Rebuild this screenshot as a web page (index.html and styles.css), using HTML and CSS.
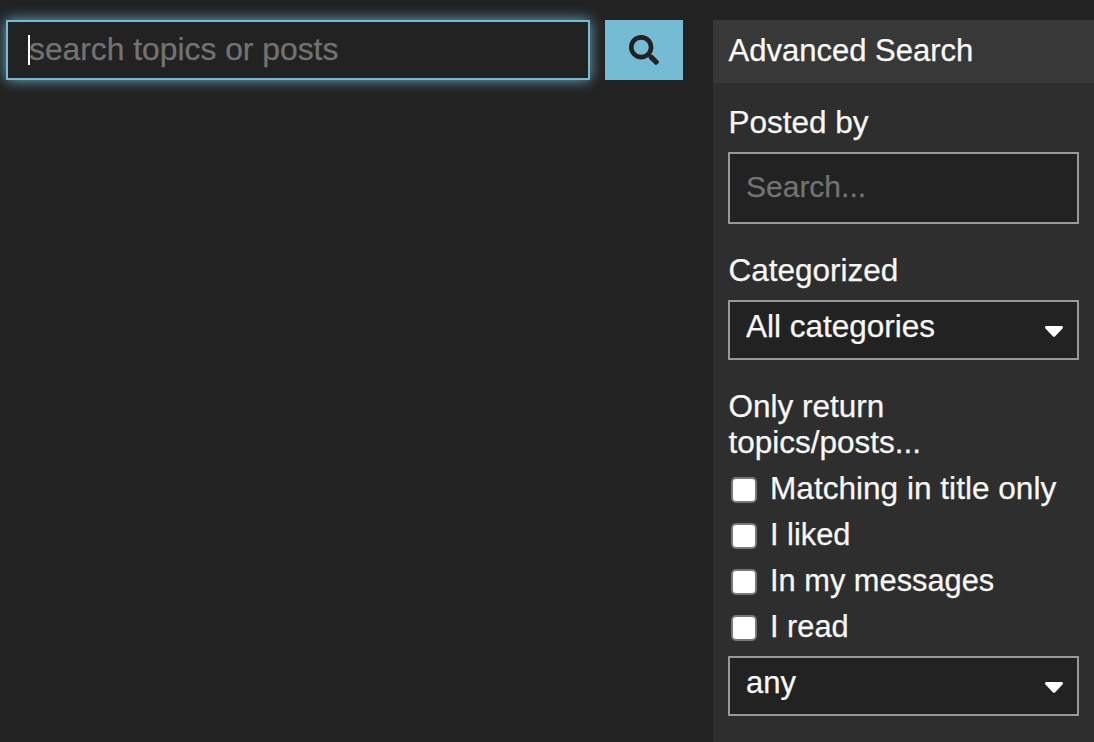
FILE: index.html
```html
<!DOCTYPE html>
<html lang="en">
<head>
<meta charset="utf-8">
<title>Search</title>
<link rel="stylesheet" href="styles.css">
</head>
<body>
<main class="layout">
  <section class="search-bar">
    <div class="search-field">
      <input class="search-input" type="text" placeholder="search topics or posts">
      <span class="caret"></span>
    </div>
    <button class="search-button" type="button" aria-label="Search">
      <svg class="search-icon" viewBox="0 0 512 512"><path d="M505 442.7L405.3 343c-4.5-4.5-10.6-7-17-7H372c27.6-35.3 44-79.7 44-128C416 93.1 322.9 0 208 0S0 93.1 0 208s93.1 208 208 208c48.3 0 92.7-16.4 128-44v16.3c0 6.4 2.5 12.5 7 17l99.7 99.7c9.4 9.4 24.6 9.4 33.9 0l28.3-28.3c9.4-9.4 9.4-24.6.1-34zM208 336c-70.7 0-128-57.2-128-128 0-70.7 57.2-128 128-128 70.7 0 128 57.2 128 128 0 70.7-57.2 128-128 128z"/></svg>
    </button>
  </section>
  <aside class="panel">
    <h2 class="panel-title">Advanced Search</h2>
    <div class="panel-body">
      <label class="label">Posted by</label>
      <input class="text-input" type="text" placeholder="Search...">
      <label class="label label-next">Categorized</label>
      <div class="select-wrap">
        <select class="select"><option>All categories</option></select>
        <svg class="arrow" viewBox="0 0 18 11"><path d="M1.5 0h15c1.3 0 2 1.5 1 2.500l-7.300 7.800c-.7.7-1.700.7-2.400 0L.5 2.500C-.5 1.500.2 0 1.500 0z"/></svg>
      </div>
      <label class="label label-next label-checks">Only return topics/posts...</label>
      <ul class="checks">
        <li class="check check-long"><input class="checkbox" type="checkbox"><span>Matching in title only</span></li>
        <li class="check"><input class="checkbox" type="checkbox"><span>I liked</span></li>
        <li class="check"><input class="checkbox" type="checkbox"><span>In my messages</span></li>
        <li class="check"><input class="checkbox" type="checkbox"><span>I read</span></li>
      </ul>
      <div class="select-wrap">
        <select class="select select-short"><option>any</option></select>
        <svg class="arrow" viewBox="0 0 18 11"><path d="M1.5 0h15c1.3 0 2 1.5 1 2.500l-7.300 7.800c-.7.7-1.700.7-2.400 0L.5 2.500C-.5 1.500.2 0 1.500 0z"/></svg>
      </div>
    </div>
  </aside>
</main>
</body>
</html>
```
FILE: styles.css
```css
* { box-sizing: border-box; }
html, body { height: 100%; }
body {
  margin: 0;
  background: #222222;
  color: #f7f7f7;
  font-family: "Liberation Sans", Arial, sans-serif;
  font-size: 31.5px;
  overflow: hidden;
  -webkit-text-stroke: 0.25px currentColor;
}
.layout {
  display: flex;
  align-items: stretch;
  height: 100%;
  padding: 20px 0 0 6px;
}
.search-bar {
  display: flex;
  align-items: flex-start;
  gap: 15px;
  flex: none;
}
.search-field { position: relative; width: 584px; height: 60px; }
.search-input {
  display: block;
  width: 100%;
  height: 100%;
  padding: 0 21px 2px;
  background: #222222;
  color: #f7f7f7;
  border: 2px solid #74bcd4;
  border-radius: 0;
  outline: none;
  font: inherit;
  font-size: 31.8px;
  box-shadow: 0 0 13px rgba(116, 188, 212, 0.9);
}
.search-input::placeholder { color: #737373; opacity: 1; }
.caret {
  position: absolute;
  left: 22px;
  top: 15px;
  width: 2px;
  height: 30px;
  background: #ffffff;
}
.search-button {
  display: flex;
  align-items: center;
  justify-content: center;
  width: 78px;
  height: 60px;
  padding: 0;
  border: 0;
  background: #74bbd3;
}
.search-icon { width: 30px; height: 30px; fill: #222222; }
.panel {
  flex: 1;
  margin-left: 30px;
  background: #2e2e2e;
  min-width: 0;
}
.panel-title {
  margin: 0;
  height: 63px;
  padding: 0 15.5px 2px;
  display: flex;
  align-items: center;
  background: #383838;
  font-size: 31px;
  font-weight: 400;
  color: #fafafa;
}
.panel-body {
  display: flex;
  flex-direction: column;
  padding: 21px 15px 0;
}
.label { display: block; padding-left: 0.5px; line-height: 36px; margin-bottom: 12px; }
.label-next { margin-top: 28px; }
.label-checks { margin-bottom: 5px; }
.text-input {
  display: block;
  width: 100%;
  height: 72px;
  padding: 0 16px 3px;
  background: #222222;
  color: #f7f7f7;
  border: 2px solid #999999;
  border-radius: 0;
  font: inherit;
  font-size: 30px;
  outline: none;
}
.text-input::placeholder { color: #737373; opacity: 1; }
.select-wrap { position: relative; height: 60px; }
.select {
  display: block;
  width: 100%;
  height: 60px;
  padding: 0 16px 8px;
  background: #222222;
  color: #f7f7f7;
  border: 2px solid #999999;
  border-radius: 0;
  font: inherit;
  appearance: none;
  outline: none;
}
.select-short { font-size: 31px; }
.arrow {
  position: absolute;
  right: 16px;
  top: 26px;
  width: 18px;
  height: 11px;
  fill: #ffffff;
}
.checks {
  list-style: none;
  margin: 0 0 7px;
  padding: 0;
  font-size: 30.8px;
}
.check {
  display: flex;
  align-items: center;
  gap: 13px;
  height: 46px;
  padding-left: 3px;
}
.check span { padding-top: 2px; }
.check-long { font-size: 31.6px; }
.check-long span { padding-top: 0; }
.checkbox {
  appearance: none;
  flex: none;
  width: 26px;
  height: 26px;
  margin: 4px 0 0;
  background: #ffffff;
  border: 2px solid #777777;
  border-radius: 5px;
}
```
